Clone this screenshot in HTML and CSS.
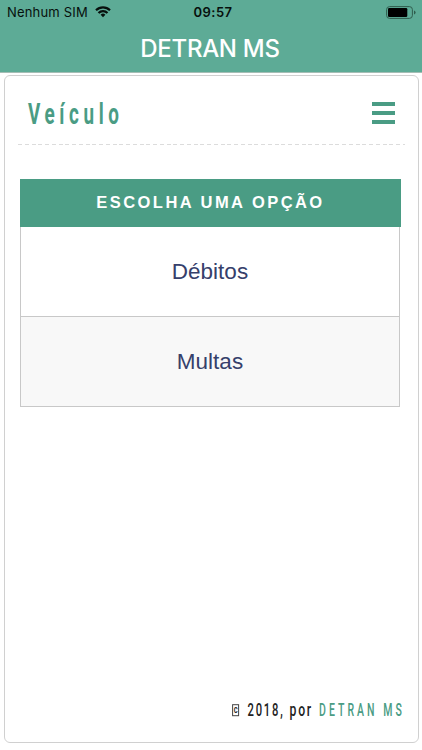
FILE: index.html
```
<!DOCTYPE html>
<html lang="pt-BR">
<head>
<meta charset="utf-8">
<meta name="viewport" content="width=device-width, initial-scale=1">
<title>DETRAN MS</title>
<link rel="stylesheet" href="styles.css">
</head>
<body>
<header class="topbar">
  <div class="status">
    <div class="carrier">
      <span>Nenhum SIM</span>
      <svg class="wifi" width="16" height="12" viewBox="0 0 16 12" fill="none" stroke="#07100d" stroke-width="2.2">
        <path d="M1 4.3A10 10 0 0 1 15 4.3"/>
        <path d="M3.5 7A6.4 6.4 0 0 1 12.5 7"/>
        <path d="M8 11.2 5.6 8.8A3.4 3.4 0 0 1 10.4 8.8Z" fill="#07100d" stroke="none"/>
      </svg>
    </div>
    <div class="time">09:57</div>
    <svg class="battery" width="30" height="13" viewBox="0 0 30 13">
      <rect x=".6" y=".6" width="25.8" height="11.8" rx="3" fill="none" stroke="#2f5c4d" stroke-width="1"/>
      <rect x="2" y="2" width="19.3" height="9" rx="1.2" fill="#000"/>
      <path d="M28 4.5Q29.6 5 29.6 6.5T28 8.5Z" fill="#2f5c4d"/>
    </svg>
  </div>
  <h1 class="app-title">DETRAN MS</h1>
</header>
<main class="card">
  <div class="page-head">
    <svg class="page-title" width="120" height="40" role="heading">
      <text transform="translate(0 24) scale(.65 1)" textLength="140">Veículo</text>
    </svg>
    <div class="menu"><i></i><i></i><i></i></div>
  </div>
  <section class="options">
    <h2 class="options-head">ESCOLHA UMA OPÇÃO</h2>
    <a class="option">Débitos</a>
    <a class="option alt">Multas</a>
  </section>
  <footer class="foot">
    <svg class="credit" width="174" height="22">
      <rect x="1.6" y="4.7" width="6" height="11" fill="none" stroke="#444" stroke-width="1"/>
      <text class="mark" transform="translate(2.7 13.2) scale(.68 1)">c</text>
      <text transform="translate(16.5 16) scale(.64 1)" textLength="55">2018,</text>
      <text transform="translate(58.5 16) scale(.7 1)" textLength="31">por</text>
      <text class="brand" transform="translate(88 16) scale(.6 1)" textLength="138">DETRAN MS</text>
    </svg>
  </footer>
</main>
</body>
</html>
```
FILE: styles.css
```
* { box-sizing: border-box; }
body {
  margin: 0;
  height: 750px;
  display: flex;
  flex-direction: column;
  background: #fff;
  font-family: "Liberation Sans", Arial, sans-serif;
  overflow: hidden;
}
.topbar {
  height: 73px;
  flex: none;
  background: #5dab96;
  border-bottom: 1px solid #a5bdb5;
  font-family: Inter, sans-serif;
}
.status {
  height: 24px;
  display: grid;
  grid-template-columns: 1fr auto 1fr;
  align-items: center;
  padding: 0 6px 0 7px;
  color: #07100d;
  font-size: 13px;
}
.carrier { display: flex; align-items: center; gap: 7px; letter-spacing: .18px; }
.time { font-weight: 600; letter-spacing: .5px; padding-left: 3px; }
.battery { justify-self: end; }
.app-title {
  margin: 0;
  height: 48px;
  line-height: 49px;
  padding-right: 2px;
  text-align: center;
  color: #fff;
  font-size: 24px;
  font-weight: 500;
  letter-spacing: -.3px;
}
.card {
  flex: none;
  height: 668px;
  margin: 2px 3px 0 4px;
  padding: 0 13px;
  border: 1.5px solid #d0d0d0;
  border-radius: 6px;
  display: flex;
  flex-direction: column;
}
.page-head {
  height: 69px;
  display: flex;
  justify-content: space-between;
  padding: 24px 10px 0;
  background: repeating-linear-gradient(90deg, #dcdcdc 0 4px, transparent 4px 6.75px) 0 100% / 100% 1px no-repeat;
}
.page-title {
  font: 700 29px Roboto, sans-serif;
  fill: #4a9c84;
  overflow: visible;
}
.menu { width: 23px; display: flex; flex-direction: column; gap: 5px; padding-top: 2px; }
.menu i { height: 4px; background: #4a9c84; }
.options { margin: 34px 4px 0 2px; }
.options-head {
  margin: 0;
  height: 48px;
  line-height: 47px;
  background: #4a9c84;
  color: #fff;
  text-align: center;
  font-size: 16.5px;
  letter-spacing: 2.45px;
}
.option {
  display: block;
  height: 90px;
  margin-right: 1px;
  line-height: 89px;
  border: 1px solid #c8c8c8;
  border-top: 0;
  text-align: center;
  color: #36406b;
  font-size: 22.5px;
}
.alt { background: #f8f8f8; }
.foot { margin-top: auto; height: 42px; display: flex; justify-content: flex-end; }
.credit { font: 500 17.5px Roboto, sans-serif; fill: #222; overflow: visible; }
.mark { font-size: 11px; }
.brand { fill: #4a9c84; }
```
